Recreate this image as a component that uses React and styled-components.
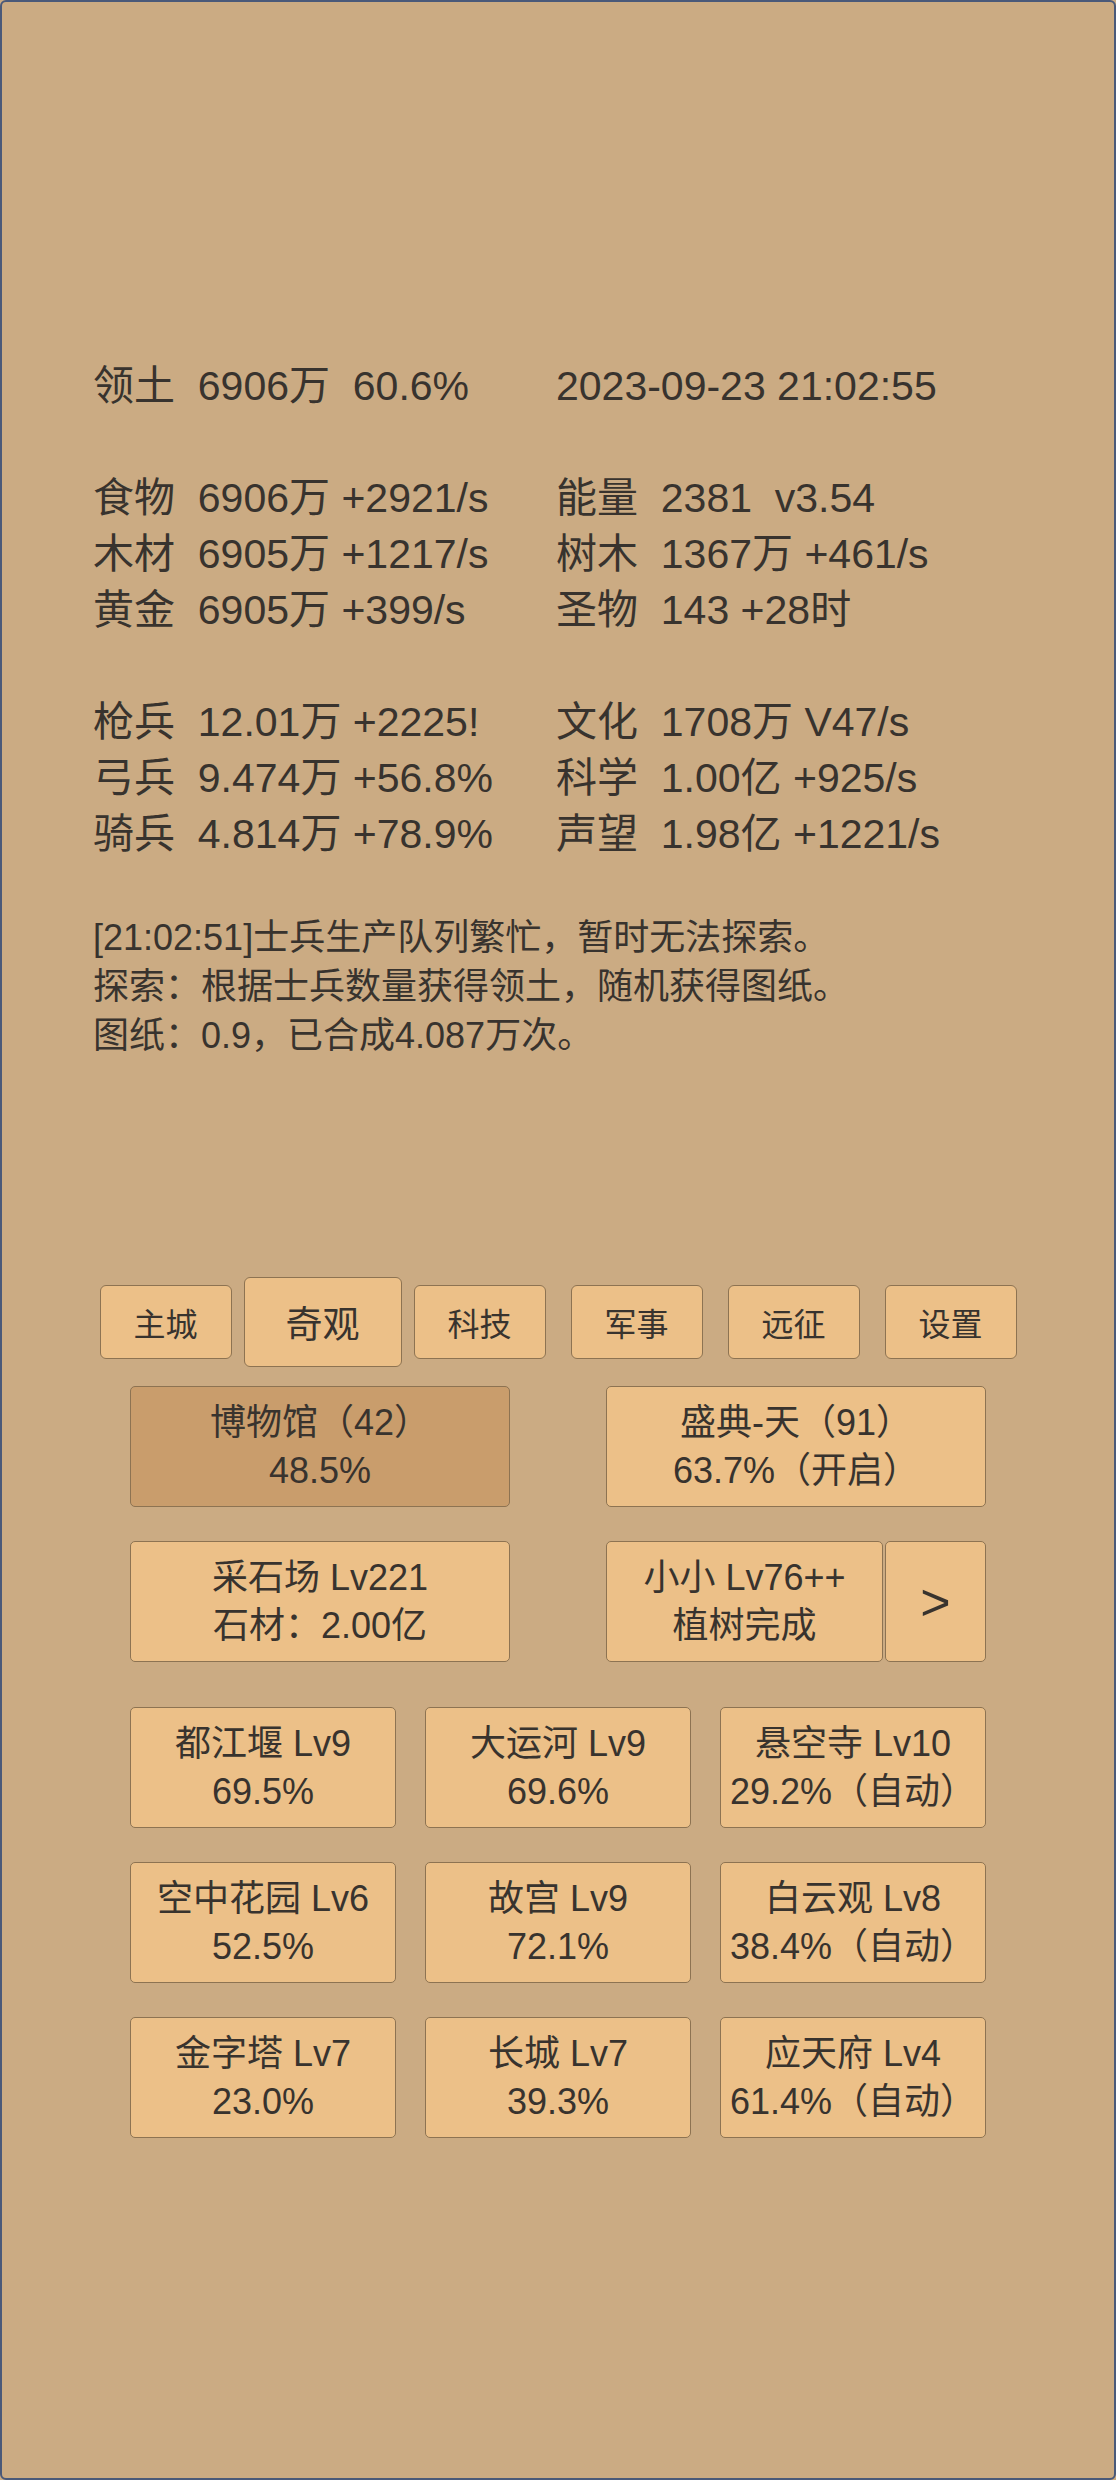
import styled, { createGlobalStyle } from "styled-components";

const Global = createGlobalStyle`
  html, body {
    margin: 0;
    padding: 0;
    background: #cbab83;
  }
  * {
    box-sizing: border-box;
  }
`;

const Page = styled.div`
  width: 1116px;
  height: 2480px;
  border: 2px solid #4a5979;
  border-radius: 6px;
  background-color: #cbab83;
  color: #38332e;
  font-family: "Liberation Sans", "Noto Sans CJK SC", sans-serif;
  padding-top: 356px;
  overflow: hidden;
`;

const Stats = styled.div`
  display: grid;
  grid-template-columns: 463px 1fr;
  padding-left: 91px;
  font-size: 41px;
  line-height: 56px;
`;

const Line = styled.div`
  white-space: pre;
  height: 56px;
`;

const Log = styled.div`
  margin-top: 51px;
  padding-left: 91px;
  font-size: 36px;
  line-height: 49px;

  p {
    margin: 0;
    white-space: pre;
  }
`;

const Tabs = styled.div`
  margin-top: 217px;
  display: flex;
  justify-content: center;
  align-items: center;
  height: 90px;
`;

const Slot = styled.div`
  width: 157px;
  display: flex;
  justify-content: center;
`;

const Tab = styled.div`
  flex: none;
  width: ${(p) => (p.$active ? "158px" : "132px")};
  height: ${(p) => (p.$active ? "90px" : "74px")};
  font-size: ${(p) => (p.$active ? "37px" : "32px")};
  display: flex;
  align-items: center;
  justify-content: center;
  background-color: #ecc088;
  border: 1px solid #8d7352;
  border-radius: 6px;
`;

const Pair = styled.div`
  display: grid;
  grid-template-columns: 380px 380px;
  column-gap: 96px;
  justify-content: center;
  margin-top: ${(p) => p.$top}px;
`;

const Grid = styled.div`
  display: grid;
  grid-template-columns: repeat(3, 266px);
  column-gap: 29px;
  row-gap: 34px;
  justify-content: center;
  margin-top: 45px;
`;

const Card = styled.div`
  height: 121px;
  display: flex;
  flex-direction: column;
  align-items: center;
  justify-content: center;
  font-size: 36px;
  line-height: 48px;
  white-space: pre;
  background-color: ${(p) => (p.$dim ? "#c99d6c" : "#ecc088")};
  border: 1px solid #8d7352;
  border-radius: 5px;
  flex: ${(p) => (p.$grow ? "1" : "none")};
`;

const Split = styled.div`
  display: flex;
  gap: 2px;
`;

const Arrow = styled(Card)`
  width: 101px;
  font-size: 52px;
`;

const left = [
  "领土  6906万  60.6%",
  "",
  "食物  6906万 +2921/s",
  "木材  6905万 +1217/s",
  "黄金  6905万 +399/s",
  "",
  "枪兵  12.01万 +2225!",
  "弓兵  9.474万 +56.8%",
  "骑兵  4.814万 +78.9%",
];

const right = [
  "2023-09-23 21:02:55",
  "",
  "能量  2381  v3.54",
  "树木  1367万 +461/s",
  "圣物  143 +28时",
  "",
  "文化  1708万 V47/s",
  "科学  1.00亿 +925/s",
  "声望  1.98亿 +1221/s",
];

const tabs = ["主城", "奇观", "科技", "军事", "远征", "设置"];

const wonders = [
  ["都江堰 Lv9", "69.5%"],
  ["大运河 Lv9", "69.6%"],
  ["悬空寺 Lv10", "29.2%（自动）"],
  ["空中花园 Lv6", "52.5%"],
  ["故宫 Lv9", "72.1%"],
  ["白云观 Lv8", "38.4%（自动）"],
  ["金字塔 Lv7", "23.0%"],
  ["长城 Lv7", "39.3%"],
  ["应天府 Lv4", "61.4%（自动）"],
];

const App = () => {
  return (
    <Page>
      <Global />
      <Stats>
        <div>
          {left.map((t, i) => (
            <Line key={i}>{t}</Line>
          ))}
        </div>
        <div>
          {right.map((t, i) => (
            <Line key={i}>{t}</Line>
          ))}
        </div>
      </Stats>

      <Log>
        <p>[21:02:51]士兵生产队列繁忙，暂时无法探索。</p>
        <p>探索：根据士兵数量获得领土，随机获得图纸。</p>
        <p>图纸：0.9，已合成4.087万次。</p>
      </Log>

      <Tabs>
        {tabs.map((t) => (
          <Slot key={t}>
            <Tab $active={t === "奇观"}>{t}</Tab>
          </Slot>
        ))}
      </Tabs>

      <Pair $top={19}>
        <Card $dim>
          <span>博物馆（42）</span>
          <span>48.5%</span>
        </Card>
        <Card>
          <span>盛典-天（91）</span>
          <span>63.7%（开启）</span>
        </Card>
      </Pair>

      <Pair $top={34}>
        <Card>
          <span>采石场 Lv221</span>
          <span>石材：2.00亿</span>
        </Card>
        <Split>
          <Card $grow>
            <span>小小 Lv76++</span>
            <span>植树完成</span>
          </Card>
          <Arrow>&gt;</Arrow>
        </Split>
      </Pair>

      <Grid>
        {wonders.map(([a, b]) => (
          <Card key={a}>
            <span>{a}</span>
            <span>{b}</span>
          </Card>
        ))}
      </Grid>
    </Page>
  );
};

export default App;
